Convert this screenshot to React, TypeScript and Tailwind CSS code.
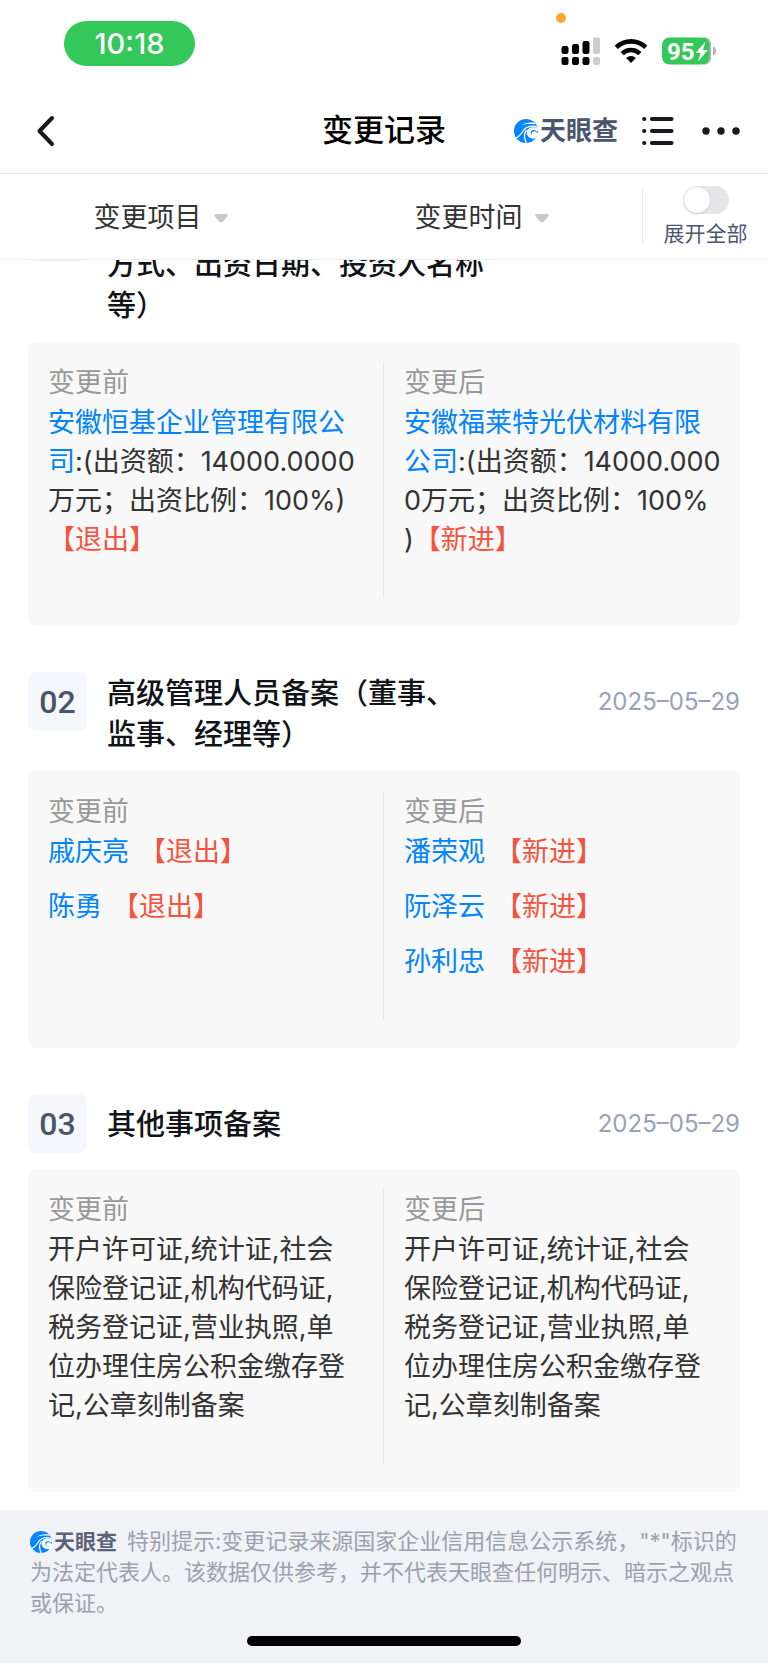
import type { ReactNode } from "react";

type Entry = {
  lines: ReactNode[];
};

type ChangeRecord = {
  id: string;
  no: string;
  title: string[];
  date?: string;
  before: Entry[];
  after: Entry[];
};

function Company({ children }: { children: ReactNode }) {
  return (
    <a href="#" className="text-[#0084ff]">
      {children}
    </a>
  );
}

function Tag({ children }: { children: ReactNode }) {
  return <span className="text-[#f4543f]">【{children}】</span>;
}

function person(name: string, tag: string): Entry {
  return {
    lines: [
      <span className="flex gap-2.5">
        <Company>{name}</Company>
        <Tag>{tag}</Tag>
      </span>,
    ],
  };
}

const licences: Entry = {
  lines: [
    "开户许可证,统计证,社会",
    "保险登记证,机构代码证,",
    "税务登记证,营业执照,单",
    "位办理住房公积金缴存登",
    "记,公章刻制备案",
  ],
};

const records: ChangeRecord[] = [
  {
    id: "investor",
    no: "",
    title: ["方式、出资日期、投资人名称", "等）"],
    before: [
      {
        lines: [
          <Company>安徽恒基企业管理有限公</Company>,
          <>
            <Company>司</Company>:(出资额：14000.0000
          </>,
          "万元；出资比例：100%)",
          <Tag>退出</Tag>,
        ],
      },
    ],
    after: [
      {
        lines: [
          <Company>安徽福莱特光伏材料有限</Company>,
          <>
            <Company>公司</Company>:(出资额：14000.000
          </>,
          "0万元；出资比例：100%",
          <>
            )<Tag>新进</Tag>
          </>,
        ],
      },
    ],
  },
  {
    id: "managers",
    no: "02",
    title: ["高级管理人员备案（董事、", "监事、经理等）"],
    date: "2025–05–29",
    before: [person("戚庆亮", "退出"), person("陈勇", "退出")],
    after: [
      person("潘荣观", "新进"),
      person("阮泽云", "新进"),
      person("孙利忠", "新进"),
    ],
  },
  {
    id: "others",
    no: "03",
    title: ["其他事项备案"],
    date: "2025–05–29",
    before: [licences],
    after: [licences],
  },
];

function LogoMark({ className }: { className: string }) {
  return (
    <svg viewBox="0 0 24 24" className={`shrink-0 ${className}`} aria-hidden="true">
      <circle cx="12" cy="12" r="12" fill="#0084ff" />
      <path d="M20.500 3.800 C15 2.800 10.500 3.800 7.500 6.500 C11.500 4.900 16 4.600 21.500 5.400Z" fill="#fff" />
      <path d="M23.500 8.400 C17.500 5.600 11.500 8 9 12 C7.200 15 5 17.800 2 19" fill="none" stroke="#fff" strokeWidth="1.300" />
      <path d="M12.600 11 C9.800 14.500 10.200 20 12.600 24.500" fill="none" stroke="#fff" strokeWidth="1.300" />
      <path d="M24 9.300 C18.500 6.800 12.500 9 12.800 13.800 C13 18.200 17.500 20.600 21.900 19.300 L24 17 V14 L22.500 16 C19.500 17.400 16.800 16 16.600 13.700 C16.500 11.300 20 9.800 22.400 12.500 L24.500 12Z" fill="#fff" />
      <path d="M17.500 14.500 C18 12.300 20.500 11.500 22.700 13.200 L24 14.500 L22.500 17 H19Z" fill="#fff" />
    </svg>
  );
}

function StatusBar() {
  return (
    <div className="flex h-[88px] justify-between pr-[52px] pl-16">
      <div className="mt-[21px] flex h-[45px] w-[131px] items-center justify-center rounded-full bg-[#34c759] text-[29px] font-medium text-white">
        10:18
      </div>
      <svg viewBox="0 0 164 88" className="h-[88px] w-[164px]" aria-hidden="true">
        <circle cx="9" cy="18" r="5" fill="#ffa733" />
        <g fill="#000">
          <rect x="9.500" y="46" width="7" height="8" rx="2.200" />
          <rect x="20" y="44" width="7" height="10" rx="2.200" />
          <rect x="30.500" y="41" width="7" height="13" rx="2.200" />
          <rect x="9.500" y="57" width="7" height="8" rx="2.200" />
          <rect x="20" y="57" width="7" height="8" rx="2.200" />
          <rect x="30.500" y="57" width="7" height="8" rx="2.200" />
        </g>
        <rect x="41" y="37.500" width="7" height="16.500" rx="2.200" fill="#ccc" />
        <rect x="41" y="57" width="7" height="8" rx="2.200" fill="#ccc" />
        <g fill="none" stroke="#000" strokeWidth="4.600">
          <path d="M64.300 47.400 A21 21 0 0 1 93.700 47.400" />
          <path d="M70.200 53.600 A12.600 12.600 0 0 1 87.800 53.600" />
        </g>
        <path d="M79 63 L74.100 58 A7 7 0 0 1 83.900 58Z" fill="#000" />
        <path d="M152 37.500 h1.500 a6 6 0 0 1 5.500 6 v15 a6 6 0 0 1 -5.500 6 h-1.500z" fill="#b5b5b5" />
        <path d="M161 46.500 q3 1 3 4.500 t-3 4.500z" fill="#b5b5b5" />
        <rect x="110" y="37.500" width="47.500" height="27" rx="7.500" fill="#34c759" />
        <text x="115" y="59.500" fontSize="24" fontWeight="700" fill="#fff" fontFamily="Roboto, sans-serif">
          95
        </text>
        <path d="M153.500 41.500 L143.500 53 H148.500 L146 61.500 L156 50 H151Z" fill="#fff" />
      </svg>
    </div>
  );
}

function NavBar() {
  return (
    <nav className="grid h-[86px] grid-cols-[1fr_auto_1fr] items-center border-b border-[#ebebeb] px-7">
      <button type="button" aria-label="返回" className="w-9 pl-2">
        <svg viewBox="0 0 20 32" className="h-8 w-5" aria-hidden="true">
          <path d="M16 3 L3.500 16 L16 29" fill="none" stroke="#17191f" strokeWidth="4" strokeLinecap="round" strokeLinejoin="round" />
        </svg>
      </button>
      <h1 className="text-[31px] font-medium text-black">变更记录</h1>
      <div className="flex items-center justify-end">
        <a href="#" className="flex items-center gap-0.5 text-[26px] font-bold text-[#4a5670]">
          <LogoMark className="size-6" />
          天眼查
        </a>
        <button type="button" aria-label="目录" className="ml-6">
          <svg viewBox="0 0 32 30" className="h-[30px] w-8" aria-hidden="true">
            <g stroke="#17191f" strokeWidth="4.200" strokeLinecap="round">
              <path d="M10 3 H29.500 M10 15 H29.500 M10 27 H29.500" />
              <path d="M2.200 3 h.1 M2.200 15 h.1 M2.200 27 h.1" />
            </g>
          </svg>
        </button>
        <button type="button" aria-label="更多" className="ml-7">
          <svg viewBox="0 0 38 10" className="h-[10px] w-[38px]" aria-hidden="true">
            <g fill="#17191f">
              <circle cx="4" cy="5" r="3.700" />
              <circle cx="19" cy="5" r="3.700" />
              <circle cx="34" cy="5" r="3.700" />
            </g>
          </svg>
        </button>
      </div>
    </nav>
  );
}

function FilterButton({ children }: { children: ReactNode }) {
  return (
    <button type="button" className="flex flex-1 items-center justify-center gap-3 pt-1 text-[27px] text-[#333]">
      {children}
      <svg viewBox="0 0 14 9" className="h-[9px] w-[14px]" aria-hidden="true">
        <path d="M1.500 0 H12.500 Q14.500 .5 13.300 2.300 L9 7.400 Q7 9 5 7.400 L.7 2.300 Q-.5 .5 1.500 0Z" fill="#c8c8c8" />
      </svg>
    </button>
  );
}

function FilterBar() {
  return (
    <div className="flex h-[86px] items-stretch border-b border-[#ededed]">
      <FilterButton>变更项目</FilterButton>
      <FilterButton>变更时间</FilterButton>
      <label className="my-[15px] flex w-[126px] flex-col items-center justify-center gap-1.5 border-l border-[#e8eaf3] text-[21px] leading-7 text-[#4a5672]">
        <input
          type="checkbox"
          role="switch"
          className="h-7 w-[46px] shrink-0 appearance-none rounded-full bg-[#e6e6e8] p-px before:block before:size-[26px] before:rounded-full before:bg-white before:shadow-sm"
        />
        展开全部
      </label>
    </div>
  );
}

function Column({ label, entries }: { label: string; entries: Entry[] }) {
  return (
    <div className="px-5 pb-[23px] text-[27px] leading-[39px] whitespace-nowrap text-[#333] first:border-r first:border-[#e6e6e6]">
      <h3 className="leading-[41px] text-[#999]">{label}</h3>
      {entries.map((entry, i) => (
        <p key={i} className="mb-4">
          {entry.lines.map((line, j) => (
            <span key={j} className="block">
              {line}
            </span>
          ))}
        </p>
      ))}
    </div>
  );
}

function RecordCard({ record }: { record: ChangeRecord }) {
  return (
    <section>
      <div className="flex items-start">
        <span className="flex size-[59px] items-center justify-center rounded-lg bg-[#f5f7fc] font-['Roboto'] text-[32px] font-medium text-[#4a5568]">
          {record.no}
        </span>
        <h2
          className={`ml-5 flex min-h-[59px] flex-1 flex-col justify-center text-[29px] leading-[41px] font-medium text-[#111317] ${
            record.no ? "pt-px" : "pt-[41px]"
          }`}
        >
          {record.title.map((line) => (
            <span key={line}>{line}</span>
          ))}
        </h2>
        {record.date && (
          <time className="flex h-[59px] items-center text-2xl text-[#98a1b8]">
            {record.date}
          </time>
        )}
      </div>
      <div className="mt-4 rounded-lg bg-[#f8f8f8] pt-5 pb-7">
        <div className="grid grid-cols-2">
          <Column label="变更前" entries={record.before} />
          <Column label="变更后" entries={record.after} />
        </div>
      </div>
    </section>
  );
}

function Footer() {
  return (
    <footer className="bg-[#f1f2f5] px-[30px] pt-4">
      <p className="text-[22px] leading-[31px] text-[#9ba1ae]">
        <span className="mr-[10px] inline-flex items-center gap-0.5 align-top text-[21px] font-bold text-[#5a6377]">
          <LogoMark className="size-[22px]" />
          天眼查
        </span>
        特别提示:变更记录来源国家企业信用信息公示系统，"*"标识的为法定代表人。该数据仅供参考，并不代表天眼查任何明示、暗示之观点或保证。
      </p>
      <div className="mx-auto mt-[17px] h-[10px] w-[274px] rounded-full bg-black" />
      <div className="h-[17px]" />
    </footer>
  );
}

function App() {
  return (
    <div className="min-h-screen bg-white font-['Inter','Noto_Sans_CJK_SC',sans-serif]">
      <header>
        <StatusBar />
        <NavBar />
        <FilterBar />
      </header>
      <main className="overflow-hidden">
        <div className="-mt-[57px] flex flex-col gap-[46px] px-7 pb-[18px]">
          {records.map((record) => (
            <RecordCard key={record.id} record={record} />
          ))}
        </div>
      </main>
      <Footer />
    </div>
  );
}

export default App;
